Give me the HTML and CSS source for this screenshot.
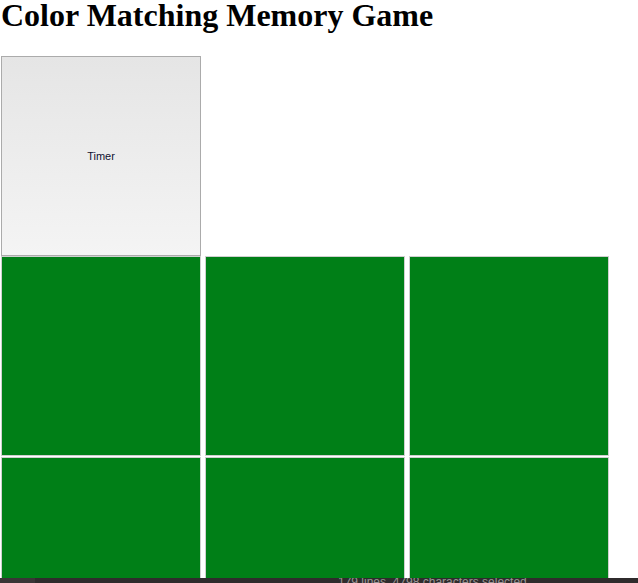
FILE: index.html
```html
<!DOCTYPE html>
<html lang="en">
<head>
    <meta charset="UTF-8">
    <meta name="viewport" content="width=device-width, initial-scale=1.0">
    <title>Color Matching Memory Game</title>
    <link rel="stylesheet" href="styles.css">
</head>
<body>
    <h1>Color Matching Memory Game</h1>

    <div class="board">
        <button class="timer" id="timer">Timer</button>

        <!-- Cards start face down (green) -->
        <div class="cards" id="cards">
            <button class="card"></button>
            <button class="card"></button>
            <button class="card"></button>
            <button class="card"></button>
            <button class="card"></button>
            <button class="card"></button>
        </div>
    </div>

    <div class="status-bar">
        <span class="status-text">179 lines, 4798 characters selected</span>
    </div>
</body>
</html>
```

FILE: styles.css
```css
body {
    margin: 0;
    font-family: "Liberation Serif", "Times New Roman", serif;
}

h1 {
    font-size: 32px;
    font-weight: bold;
    margin: 0 0 25px 1px;
    line-height: 31px;
}

.board {
    padding-left: 1px;
}

.timer {
    display: flex;
    align-items: center;
    justify-content: center;
    width: 200px;
    height: 200px;
    margin: 0;
    padding: 0;
    border: 1px solid #ababab;
    background: linear-gradient(to bottom, #e5e5e5, #f4f4f4);
    font-family: "Liberation Sans", Arial, sans-serif;
    font-size: 11px;
    color: #101030;
}

.cards {
    display: grid;
    grid-template-columns: repeat(3, 200px);
    column-gap: 4px;
    row-gap: 1px;
}

.card {
    width: 200px;
    height: 200px;
    margin: 0;
    padding: 0;
    border: 1px solid #cfcfcf;
    background-color: #007f17;
    cursor: pointer;
}

/* editor status bar peeking in at the bottom of the window */
.status-bar {
    position: fixed;
    left: 0;
    right: 0;
    bottom: 0;
    height: 5px;
    overflow: hidden;
    background-color: #2f2b2c;
    border-left: 35px solid #3a3536;
}

.status-text {
    display: block;
    padding-left: 303px;
    margin-top: -3px;
    font-family: "Liberation Sans", Arial, sans-serif;
    font-size: 12px;
    line-height: 14px;
    color: #9a9596;
}
```
